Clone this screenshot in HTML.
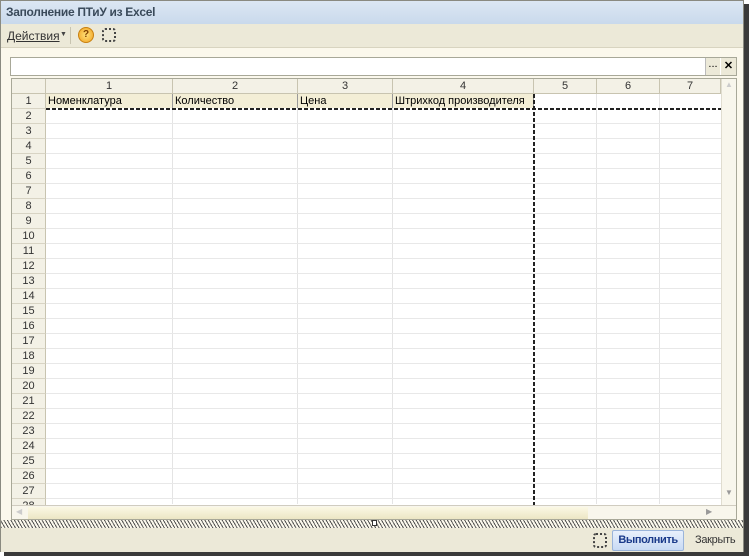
<!DOCTYPE html>
<html><head><meta charset="utf-8"><style>
*{margin:0;padding:0;box-sizing:border-box}
body{width:749px;height:556px;background:#fff;position:relative;overflow:hidden;font-family:"Liberation Sans",sans-serif;font-size:11px;color:#000}
.win{position:absolute;left:0;top:0;width:744px;height:552px;background:#fbf8ec;border:1px solid #8a8a80}
.shR{position:absolute;left:744px;top:4px;width:5px;height:552px;background:#3a3a3a}
.shB{position:absolute;left:4px;top:552px;width:745px;height:4px;background:#3a3a3a}
.title{position:absolute;left:0;top:0;width:742px;height:23px;background:linear-gradient(#dce7f3,#c9d9ec);font-weight:bold;font-size:12px;color:#3a4a5a;padding:4px 0 0 5px;letter-spacing:-0.3px}
.tb{position:absolute;left:0;top:23px;width:742px;height:24px;background:#ece9d8;border-bottom:1px solid #d8d4c0}
.g{position:absolute}
.fld{position:absolute;left:9px;top:56px;width:727px;height:19px;background:#fff;border:1px solid #a8a898}
.grid{position:absolute;left:10px;top:77px;width:726px;height:442px;background:#fff;border:1px solid #a8a898;overflow:hidden}
.hr{position:absolute;left:0;top:0;width:709px;height:15px;background:#f3f1e6;border-bottom:1px solid #c8c4b0}
.hc{position:absolute;top:0;height:15px;border-right:1px solid #c8c4b0;text-align:center;font-size:11px;line-height:14px;color:#333}
.rh{position:absolute;left:0;width:34px;height:15px;background:#f3f1e6;border-right:1px solid #c8c4b0;border-bottom:1px solid #d8d4c4;text-align:center;line-height:15px;color:#333}
.vl{position:absolute;top:15px;width:1px;height:410px;background:#e4e4e4}
.hl{position:absolute;left:34px;width:675px;height:1px;background:#e8e8e8}
.c1{position:absolute;top:15px;height:14px;background:#f3eed6;border-right:1px solid #999;padding-left:2px;line-height:14px}
.sv{position:absolute;left:709px;top:0;width:15px;height:426px;background:#f8f6ec;border-left:1px solid #e0ddd0}
.sh{position:absolute;left:0;top:426px;width:724px;height:15px;background:#f8f6ec;border-top:1px solid #d0ccc0}
.hatch{position:absolute;left:0;top:519px;width:742px;height:8px;background:repeating-linear-gradient(60deg,#555 0 1px,#fbf8ec 1px 3px)}
.bot{position:absolute;left:0;top:527px;width:742px;height:24px;background:#ece9d8}
</style></head><body>
<div class="shR"></div><div class="shB"></div>
<div class="win">
<div class="title">Заполнение ПТиУ из Excel</div>
<div class="tb">
 <span class="g" style="left:6px;top:5px;text-decoration:underline;color:#333;font-size:12px">Действия</span>
 <span class="g" style="left:59px;top:7px;font-size:7px;color:#444">▼</span>
 <div class="g" style="left:69px;top:3px;width:1px;height:17px;background:#c8c4b0"></div>
 <div class="g" style="left:77px;top:3px;width:16px;height:16px;border-radius:50%;background:radial-gradient(#ffe27a,#f0a020);border:1px solid #c88010;font-size:10px;font-weight:bold;text-align:center;line-height:14px;color:#804000">?</div>
 <div class="g" style="left:101px;top:4px;width:14px;height:14px;border:2px dotted #444;border-radius:3px"></div>
</div>
<div class="fld">
 <div class="g" style="left:694px;top:0;width:15px;height:17px;background:#ece9d8;border-left:1px solid #bbb;text-align:center;line-height:12px">...</div>
 <div class="g" style="left:710px;top:0;width:15px;height:17px;background:#ece9d8;text-align:center;font-weight:bold;line-height:17px">✕</div>
</div>
<div class="grid">
 <div class="hr"></div>
 <div class="hc" style="left:0;width:34px"></div>
 <div class="hc" style="left:34px;width:127px">1</div>
 <div class="hc" style="left:161px;width:125px">2</div>
 <div class="hc" style="left:286px;width:95px">3</div>
 <div class="hc" style="left:381px;width:141px">4</div>
 <div class="hc" style="left:522px;width:63px">5</div>
 <div class="hc" style="left:585px;width:63px">6</div>
 <div class="hc" style="left:648px;width:61px">7</div>
 <div class="vl" style="left:160px"></div><div class="vl" style="left:285px"></div><div class="vl" style="left:380px"></div><div class="vl" style="left:584px"></div><div class="vl" style="left:647px"></div>
 <div class="hl" style="top:44px"></div><div class="hl" style="top:59px"></div><div class="hl" style="top:74px"></div><div class="hl" style="top:89px"></div><div class="hl" style="top:104px"></div><div class="hl" style="top:119px"></div><div class="hl" style="top:134px"></div><div class="hl" style="top:149px"></div><div class="hl" style="top:164px"></div><div class="hl" style="top:179px"></div><div class="hl" style="top:194px"></div><div class="hl" style="top:209px"></div><div class="hl" style="top:224px"></div><div class="hl" style="top:239px"></div><div class="hl" style="top:254px"></div><div class="hl" style="top:269px"></div><div class="hl" style="top:284px"></div><div class="hl" style="top:299px"></div><div class="hl" style="top:314px"></div><div class="hl" style="top:329px"></div><div class="hl" style="top:344px"></div><div class="hl" style="top:359px"></div><div class="hl" style="top:374px"></div><div class="hl" style="top:389px"></div><div class="hl" style="top:404px"></div><div class="hl" style="top:419px"></div>
 <div class="c1" style="left:34px;width:127px">Номенклатура</div>
 <div class="c1" style="left:161px;width:125px">Количество</div>
 <div class="c1" style="left:286px;width:95px">Цена</div>
 <div class="c1" style="left:381px;width:141px">Штрихкод производителя</div>
 <div class="g" style="left:34px;top:29px;width:675px;height:2px;background:repeating-linear-gradient(90deg,#222 0 4px,transparent 4px 6px)"></div>
 <div class="g" style="left:521px;top:15px;width:2px;height:411px;background:repeating-linear-gradient(180deg,#222 0 4px,transparent 4px 6px)"></div>
 <div class="rh" style="top:15px">1</div><div class="rh" style="top:30px">2</div><div class="rh" style="top:45px">3</div><div class="rh" style="top:60px">4</div><div class="rh" style="top:75px">5</div><div class="rh" style="top:90px">6</div><div class="rh" style="top:105px">7</div><div class="rh" style="top:120px">8</div><div class="rh" style="top:135px">9</div><div class="rh" style="top:150px">10</div><div class="rh" style="top:165px">11</div><div class="rh" style="top:180px">12</div><div class="rh" style="top:195px">13</div><div class="rh" style="top:210px">14</div><div class="rh" style="top:225px">15</div><div class="rh" style="top:240px">16</div><div class="rh" style="top:255px">17</div><div class="rh" style="top:270px">18</div><div class="rh" style="top:285px">19</div><div class="rh" style="top:300px">20</div><div class="rh" style="top:315px">21</div><div class="rh" style="top:330px">22</div><div class="rh" style="top:345px">23</div><div class="rh" style="top:360px">24</div><div class="rh" style="top:375px">25</div><div class="rh" style="top:390px">26</div><div class="rh" style="top:405px">27</div><div class="rh" style="top:420px">28</div>
 <div class="sv"><span class="g" style="left:3px;top:1px;color:#ccc;font-size:8px">▲</span><span class="g" style="left:3px;top:409px;color:#999;font-size:8px">▼</span></div>
 <div class="sh"><div class="g" style="left:16px;top:1px;width:560px;height:12px;background:linear-gradient(#fbf8e4,#ece6c4)"></div><span class="g" style="left:4px;top:1px;color:#ccc;font-size:8px">◀</span><span class="g" style="left:694px;top:1px;color:#999;font-size:8px">▶</span></div>
</div>
<div class="hatch"></div>
<div class="g" style="left:371px;top:519px;width:5px;height:6px;border:1px solid #333;background:#fff"></div>
<div class="bot">
 <div class="g" style="left:592px;top:5px;width:14px;height:15px;border:2px dotted #444;border-radius:3px"></div>
 <div class="g" style="left:611px;top:2px;width:72px;height:21px;background:linear-gradient(#e8f0fc,#c8daf4);border:1px solid #9ab4da;border-radius:2px;color:#1a3a8a;font-weight:bold;text-align:center;line-height:19px;font-size:11px;letter-spacing:-0.4px">Выполнить</div>
 <span class="g" style="left:694px;top:6px;color:#333;font-size:11px;letter-spacing:-0.3px">Закрыть</span>
</div>
</div>
</body></html>
